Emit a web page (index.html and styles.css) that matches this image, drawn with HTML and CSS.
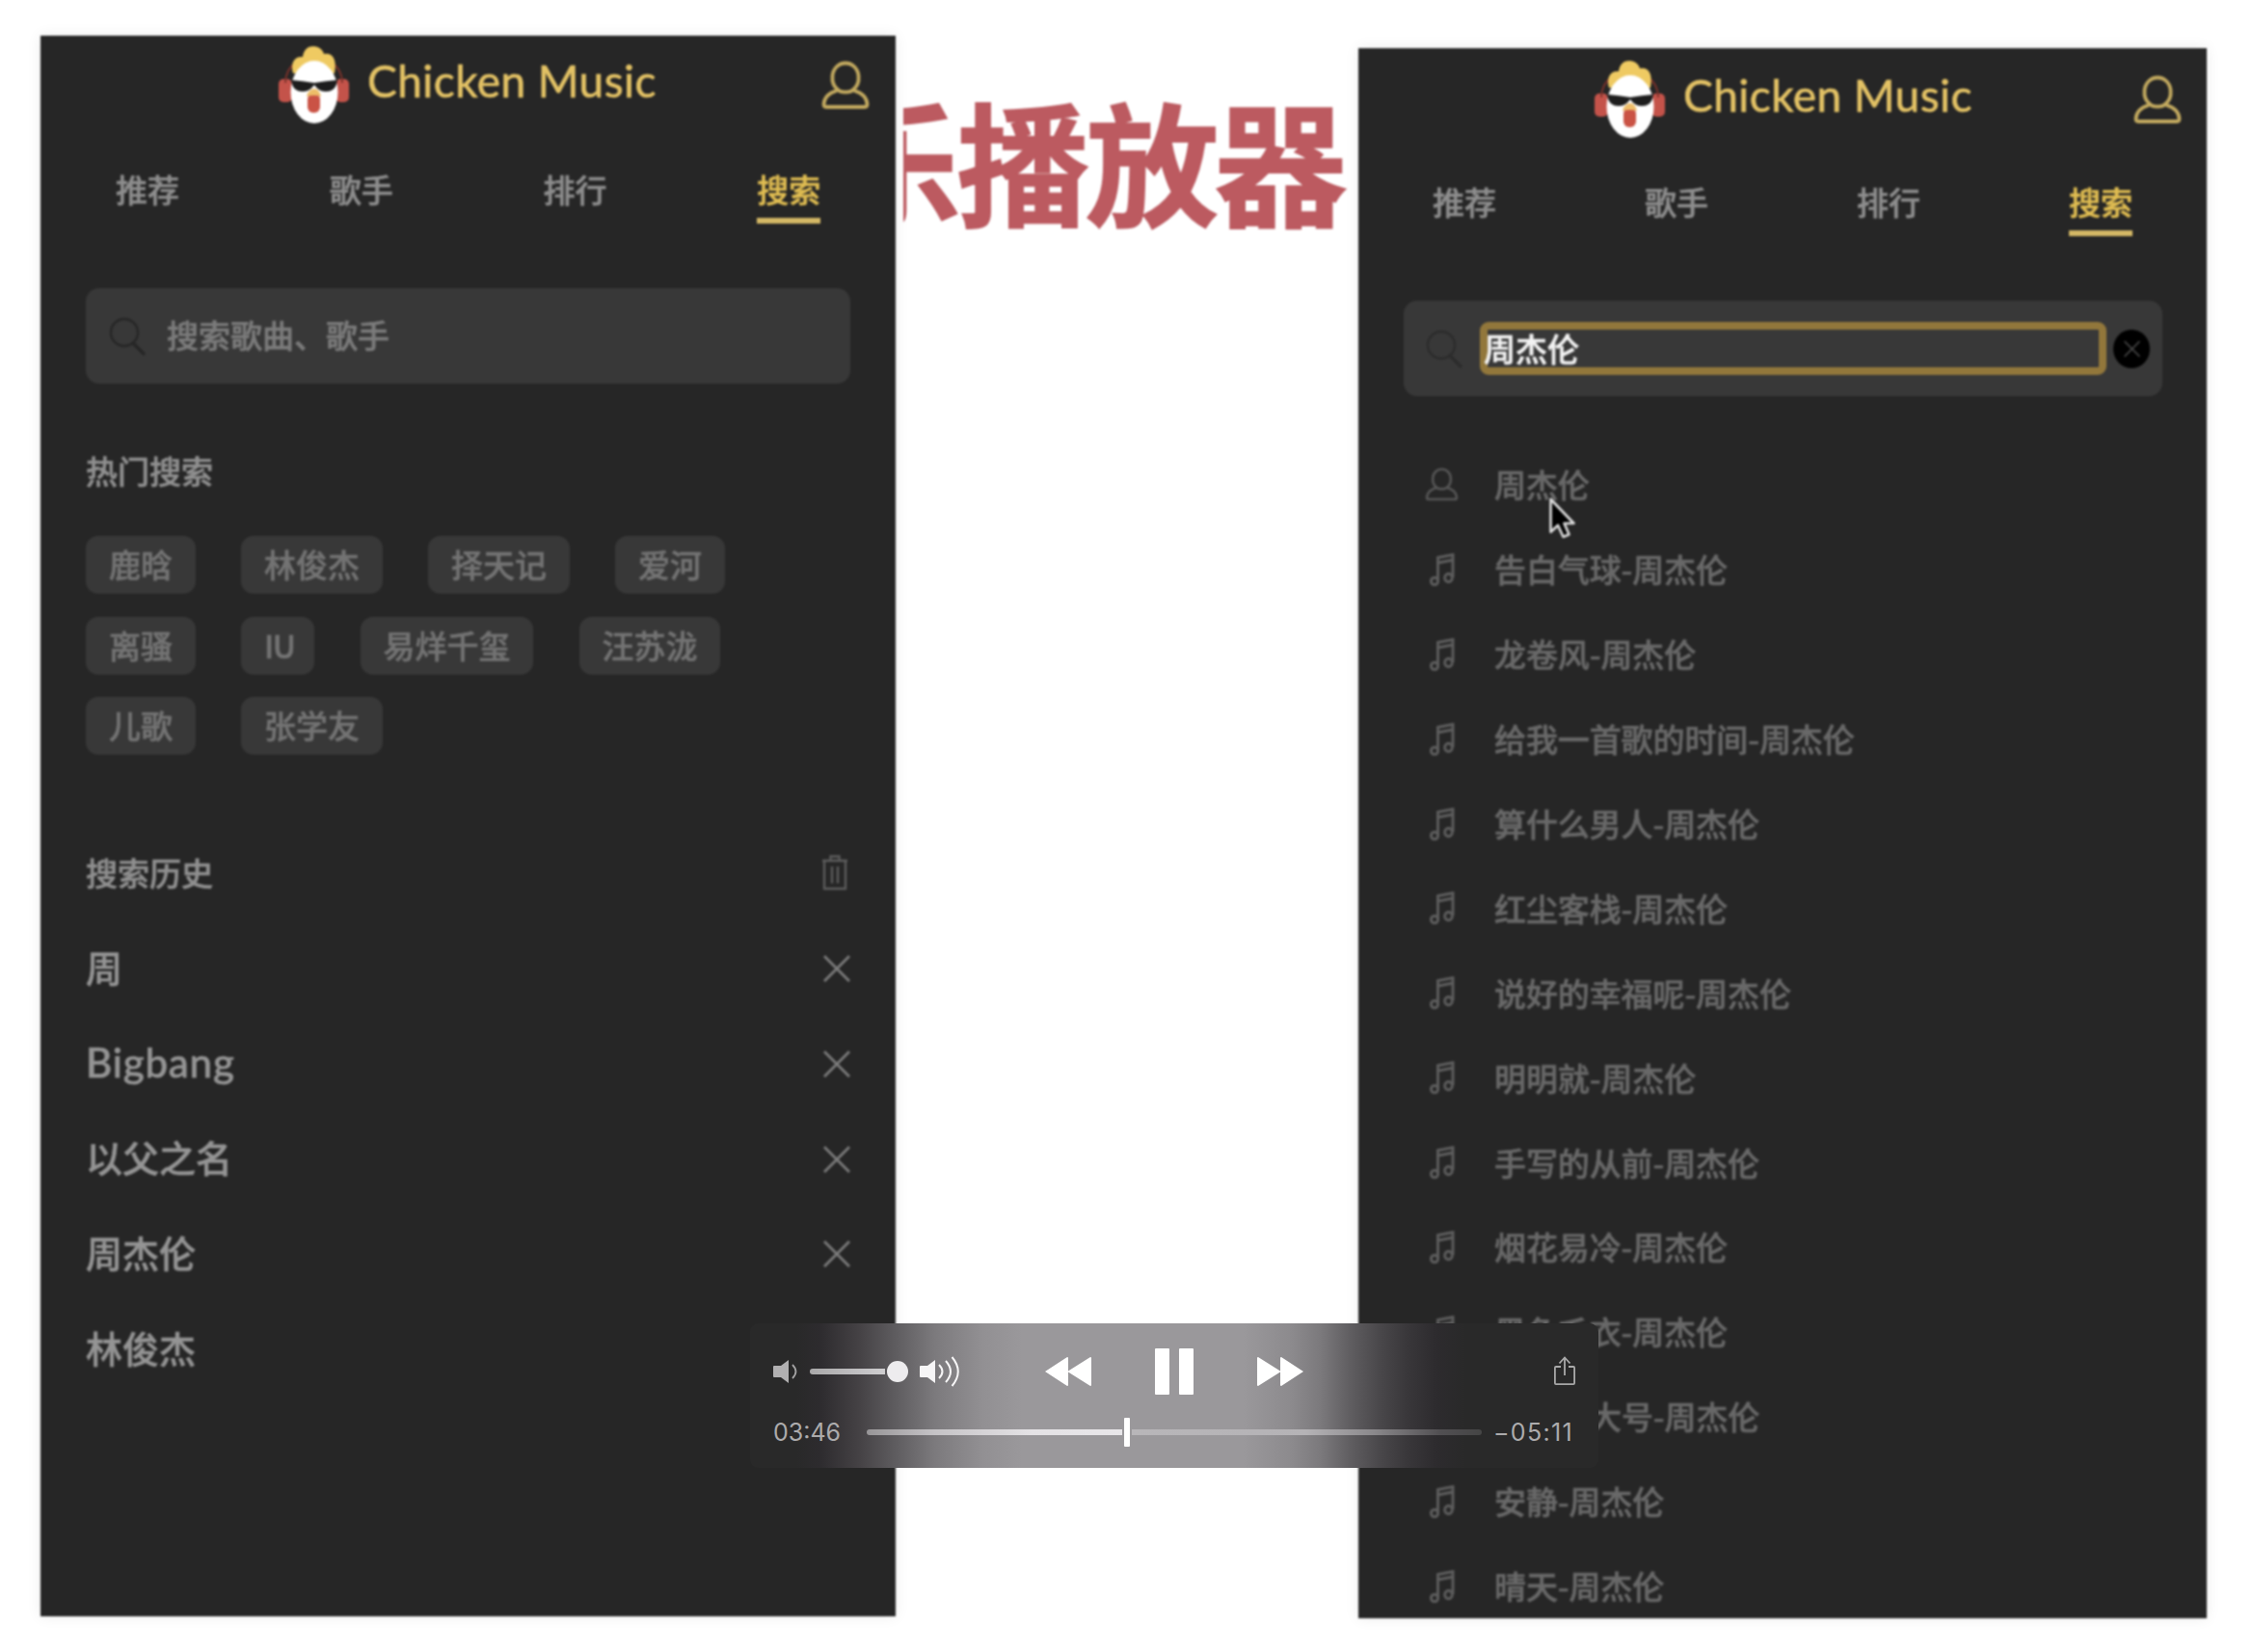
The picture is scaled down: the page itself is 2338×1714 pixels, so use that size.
FILE: index.html
```html
<!DOCTYPE html>
<html lang="zh-CN">
<head>
<meta charset="utf-8">
<title>Chicken Music</title>
<link rel="stylesheet" href="styles.css">
</head>
<body>
<svg class="defs" aria-hidden="true">
  <symbol id="chicken" viewBox="0 0 75 80">
    <rect x="1" y="34" width="14" height="24" rx="5" fill="#c4534a"/>
    <rect x="60" y="34" width="14" height="24" rx="5" fill="#c4534a"/>
    <path d="M8 38C8 26 14 20 20 16M67 38C67 26 61 20 55 16" fill="none" stroke="#7d322b" stroke-width="2"/>
    <path d="M16 28C13 18 17 10 26 11C27 3 32 0 37 0C43 0 47 4 48 8C56 6 62 12 59 28Z" fill="#efca62"/>
    <ellipse cx="38" cy="47.500" rx="24.500" ry="32.500" fill="#fff"/>
    <path d="M14 35Q26 36 38 38Q50 36 62 35C61 44 56 47 50 47C44 47 41 44 38 40C35 44 32 47 26 47C20 47 15 44 14 35Z" fill="#1d1d1d"/>
    <rect x="31" y="49" width="13" height="20" rx="6" fill="#ca5345"/>
    <path d="M30 52C31 47 35 44 38 44C41 44 44 47 45 52Q38 50 30 52Z" fill="#edbd68"/>
  </symbol>
  <symbol id="user" viewBox="0 0 50 51">
    <path d="M17 30C12.500 26.500 11 21 11.500 16C12 8 18 2.500 25 2.500S38 8 38.500 16C39 21 37.500 26.500 33 30C30 33.500 20 33.500 17 30ZM16 31C8 33.500 3 38 2.500 45Q2.500 48 5 48H45Q47.500 48 47.500 45C47 38 42 33.500 34 31" fill="none" stroke="currentColor" stroke-width="3.800" stroke-linejoin="round"/>
  </symbol>
  <symbol id="search" viewBox="0 0 38 40">
    <circle cx="16" cy="16" r="14" fill="none" stroke="currentColor" stroke-width="2.400"/>
    <path d="M25 27L36 38" stroke="currentColor" stroke-width="3.400" stroke-linecap="round"/>
  </symbol>
  <symbol id="note" viewBox="0 0 26 34">
    <g fill="none" stroke="currentColor" stroke-width="2.900">
      <ellipse cx="5" cy="29" rx="3.600" ry="3.800"/>
      <ellipse cx="19.500" cy="25.500" rx="3.800" ry="4.200"/>
      <path d="M8.500 29V4.500L24 1.500V25M8.500 10L24 7"/>
    </g>
  </symbol>
  <symbol id="trash" viewBox="0 0 28 38">
    <path d="M1 7H27M9.500 7V2.500H18.500V7M3 7V36H25V7M11 13V30.500M17 13V30.500" fill="none" stroke="currentColor" stroke-width="2.300"/>
  </symbol>
  <symbol id="cross" viewBox="0 0 28 28">
    <path d="M1 1L27 27M27 1L1 27" fill="none" stroke="currentColor" stroke-width="2.700"/>
  </symbol>
</svg>

<main class="stage">
  <section class="phone phone-left">
    <header class="bar">
      <svg class="logo"><use href="#chicken"/></svg>
      <h1 class="brand">Chicken Music</h1>
      <svg class="mine"><use href="#user"/></svg>
    </header>
    <nav class="tabs">
      <span class="tab"><b>推荐</b></span><span class="tab"><b>歌手</b></span><span class="tab"><b>排行</b></span><span class="tab active"><b>搜索</b></span>
    </nav>
    <div class="search-box">
      <svg class="search-icon"><use href="#search"/></svg>
      <span class="placeholder">搜索歌曲、歌手</span>
    </div>
    <section class="hot">
      <h2 class="title">热门搜索</h2>
      <div class="tags">
        <span class="tag">鹿晗</span><span class="tag">林俊杰</span><span class="tag">择天记</span><span class="tag">爱河</span>
        <span class="tag">离骚</span><span class="tag tag-latin">IU</span><span class="tag">易烊千玺</span><span class="tag">汪苏泷</span>
        <span class="tag">儿歌</span><span class="tag">张学友</span>
      </div>
    </section>
    <section class="history">
      <div class="history-head"><h2 class="title">搜索历史</h2><svg class="trash"><use href="#trash"/></svg></div>
      <ul class="history-list">
        <li><span>周</span><svg class="cross"><use href="#cross"/></svg></li>
        <li><span class="latin">Bigbang</span><svg class="cross"><use href="#cross"/></svg></li>
        <li><span>以父之名</span><svg class="cross"><use href="#cross"/></svg></li>
        <li><span>周杰伦</span><svg class="cross"><use href="#cross"/></svg></li>
        <li><span>林俊杰</span></li>
      </ul>
    </section>
  </section>

  <div class="headline"><span>乐播放器</span></div>

  <section class="phone phone-right">
    <header class="bar">
      <svg class="logo"><use href="#chicken"/></svg>
      <h1 class="brand">Chicken Music</h1>
      <svg class="mine"><use href="#user"/></svg>
    </header>
    <nav class="tabs">
      <span class="tab"><b>推荐</b></span><span class="tab"><b>歌手</b></span><span class="tab"><b>排行</b></span><span class="tab active"><b>搜索</b></span>
    </nav>
    <div class="search-box">
      <svg class="search-icon"><use href="#search"/></svg>
      <span class="query">周杰伦</span>
      <span class="clear"><svg class="clear-cross"><use href="#cross"/></svg></span>
    </div>
    <ul class="suggest">
      <li><svg class="singer"><use href="#user"/></svg><span>周杰伦</span></li>
      <li><svg class="note"><use href="#note"/></svg><span>告白气球-周杰伦</span></li>
      <li><svg class="note"><use href="#note"/></svg><span>龙卷风-周杰伦</span></li>
      <li><svg class="note"><use href="#note"/></svg><span>给我一首歌的时间-周杰伦</span></li>
      <li><svg class="note"><use href="#note"/></svg><span>算什么男人-周杰伦</span></li>
      <li><svg class="note"><use href="#note"/></svg><span>红尘客栈-周杰伦</span></li>
      <li><svg class="note"><use href="#note"/></svg><span>说好的幸福呢-周杰伦</span></li>
      <li><svg class="note"><use href="#note"/></svg><span>明明就-周杰伦</span></li>
      <li><svg class="note"><use href="#note"/></svg><span>手写的从前-周杰伦</span></li>
      <li><svg class="note"><use href="#note"/></svg><span>烟花易冷-周杰伦</span></li>
      <li><svg class="note"><use href="#note"/></svg><span>黑色毛衣-周杰伦</span></li>
      <li><svg class="note"><use href="#note"/></svg><span class="covered">大号-周杰伦</span></li>
      <li><svg class="note"><use href="#note"/></svg><span>安静-周杰伦</span></li>
      <li><svg class="note"><use href="#note"/></svg><span>晴天-周杰伦</span></li>
    </ul>
    <svg class="cursor" viewBox="0 0 27 43">
      <path d="M1.500 2V36L9 29L14.500 41L20.500 38.500L15.500 27H25.500Z" fill="#000" stroke="#dcdcdc" stroke-width="2.600" stroke-linejoin="round"/>
    </svg>
  </section>
</main>

<aside class="player">
  <div class="controls">
    <svg class="vol-low" viewBox="0 0 26 24"><path d="M0 7Q0 6 1 6H8L16 0V24L8 18H1Q0 18 0 17Z" fill="#b1b0b1"/><path d="M20 5Q27 12 20 19" fill="none" stroke="#a1a0a1" stroke-width="1.800"/></svg>
    <div class="volume"><i></i><b></b></div>
    <svg class="vol-high" viewBox="0 0 42 32"><path d="M0 11Q0 10 1 10H8L16 4V28L8 22H1Q0 22 0 21Z" fill="#f6f5f6"/><path d="M20 9Q27 16 20 23M27 5Q37 16 27 27M33.500 1Q46 16 33.500 31" fill="none" stroke="#f6f5f6" stroke-width="2"/></svg>
    <svg class="skip rewind" viewBox="0 0 48 30"><path d="M0 15L23 0Q24 0 24 1V14.500L47 0Q48 0 48 1V29Q48 30 47 30L24 15.500V29Q24 30 23 30Z" fill="#fff"/></svg>
    <div class="pause"><i></i><i></i></div>
    <svg class="skip forward" viewBox="0 0 48 30"><path d="M48 15L25 0Q24 0 24 1V14.500L1 0Q0 0 0 1V29Q0 30 1 30L24 15.500V29Q24 30 25 30Z" fill="#fff"/></svg>
    <svg class="share" viewBox="0 0 22 30"><path d="M7 11H2Q.9 11 .9 12V28Q.9 29.100 2 29.100H20Q21.100 29.100 21.100 28V12Q21.100 11 20 11H15M11 20V1.500M5.500 7.500L11 1.500L16.500 7.500" fill="none" stroke="#a9a9a9" stroke-width="1.800"/></svg>
  </div>
  <div class="timeline">
    <span class="time">03:46</span>
    <div class="track"><i class="played"></i><b class="thumb"></b><i class="rest"></i></div>
    <span class="time remain">−05:11</span>
  </div>
</aside>
</body>
</html>
```
FILE: styles.css
```css
* { box-sizing: border-box; }
body {
  margin: 0;
  width: 2338px;
  height: 1714px;
  overflow: hidden;
  position: relative;
  background: #fff;
  font-family: "Noto Sans CJK SC", sans-serif;
}
.defs { position: absolute; width: 0; height: 0; }
h1, h2, ul { margin: 0; padding: 0; list-style: none; }
svg { flex: none; display: block; }

.stage { display: flex; align-items: flex-start; padding-left: 42px; }

/* video frame content is slightly out of focus */
.phone {
  flex: none;
  position: relative;
  overflow: hidden;
  background: #262626;
  box-shadow: 0 0 14px rgba(0, 0, 0, .08);
  font-size: 33px;
  font-weight: 500;
  -webkit-text-stroke: .6px currentColor;
  filter: blur(.9px);
}
.phone-left { width: 887px; height: 1640px; margin-top: 37px; }
.phone-right { width: 880px; height: 1629px; margin-top: 50px; }

.bar { display: flex; height: 108px; padding: 11px 27px 0 246px; }
.logo { width: 75px; height: 80px; }
.brand {
  margin-left: 18px;
  height: 72px;
  font: 400 46px/72px Lato, sans-serif;
  letter-spacing: .45px;
  color: #e3c265;
  white-space: nowrap;
}
.mine { width: 50px; height: 51px; margin: 15px 0 0 auto; color: #c2a95f; }

.tabs { display: flex; height: 87px; padding-top: 24px; }
.tab { flex: 1; display: flex; justify-content: center; color: #8d8d8d; }
.tab b { font-weight: 500; height: 63px; line-height: 54px; }
.active { color: #e0bd52; }
.active b { border-bottom: 6px solid #d3b765; }

.search-box {
  display: flex;
  align-items: center;
  height: 99px;
  margin: 67px 47px 0;
  padding-left: 24px;
  border-radius: 14px;
  background: #383838;
}
.search-icon { width: 38px; height: 40px; color: #262626; }
.placeholder { margin: -3px 0 0 22px; color: #7b7b7b; }

.hot { padding: 72px 47px 0; }
.title { font-size: 33px; font-weight: 500; line-height: 36px; color: #8f8f8f; }
.tags { display: flex; flex-wrap: wrap; gap: 23.500px 47.500px; margin-top: 50px; padding-right: 80px; }
.tag { height: 60px; padding: 0 23.500px 0 24px; border-radius: 13px; line-height: 58px; background: #383838; color: #737373; }
.tag-latin { width: 76px; letter-spacing: -1.500px; }

.history { padding: 103px 47px 0; }
.history-head { display: flex; justify-content: space-between; align-items: center; height: 38px; }
.trash { width: 28px; height: 38px; margin-right: 2px; color: #5c5c5c; }
.history-list { margin-top: 32px; font-size: 38px; color: #949494; }
.history-list li { display: flex; align-items: center; justify-content: space-between; height: 98.700px; }
.history-list span { margin-top: -6px; }
.cross { width: 28px; height: 28px; color: #7b7b7b; }
.history-list .latin { margin-top: -4px; font-family: Lato, sans-serif; font-size: 42px; font-weight: 500; letter-spacing: .8px; }

.headline {
  flex: none;
  width: 472px;
  height: 190px;
  margin: 69px 0 0 8px;
  overflow: hidden;
  filter: blur(.8px);
}
.headline span {
  display: block;
  margin-left: -78px;
  white-space: nowrap;
  font-size: 138px;
  font-weight: 700;
  line-height: 190px;
  letter-spacing: -4.500px;
  color: #bc5a60;
  -webkit-text-stroke: 1.500px #bc5a60;
}

.phone-right .bar { padding: 13px 26px 0 244px; }
.phone-right .search-box { margin-right: 46px; }
.phone-right .search-icon { margin-left: -1px; color: #2c2c2c; }
.query {
  width: 650px;
  height: 55px;
  margin-left: 18px;
  border: 8px solid #92773b;
  border-radius: 9px;
  color: #f2f2f2;
  line-height: 38px;
  text-indent: -4px;
}
.clear {
  display: flex;
  align-items: center;
  justify-content: center;
  width: 38px;
  height: 40px;
  margin-left: 7px;
  border-radius: 50%;
  background: #000;
}
.clear-cross { width: 17px; height: 18px; color: #454545; }

.suggest { padding: 48px 0 0 69px; color: #686868; }
.suggest li { display: flex; align-items: center; height: 87.900px; white-space: nowrap; }
.suggest span { margin: -1px 0 0 37px; letter-spacing: -.1px; }
.suggest .covered { margin-left: 136px; }
.singer { width: 35px; height: 35px; color: #555; }
.note { width: 26px; height: 34px; margin: 0 4px 0 5px; color: #5d5d5d; }
.cursor { position: absolute; left: 198px; top: 466px; width: 27px; height: 43px; }

.player {
  position: absolute;
  left: 778px;
  top: 1373px;
  width: 880px;
  height: 150px;
  padding: 25px 24px 0;
  border-radius: 9px;
  background: linear-gradient(90deg, #292929 0, #292929 48px, #2d2b2e 72px, #444144 112px, #5f5d60 152px, #7c7a7d 192px, #929093 242px, #9a989b 282px, #9a989b 512px, #8c8a8d 562px, #7b797c 592px, #605e61 622px, #4a484b 652px, #39373a 682px, #2d2b2e 712px, #292929 742px);
}
.controls { display: flex; align-items: center; height: 50px; }
.vol-low { width: 26px; height: 24px; }
.volume { display: flex; align-items: center; width: 102px; margin-left: 12px; }
.volume i { width: 78px; height: 6px; margin-right: 2px; border-radius: 3px 0 0 3px; background: linear-gradient(90deg, #a9a8a9, #cfced0); }
.volume b { width: 22px; height: 22px; border-radius: 50%; background: #edecee; }
.vol-high { width: 42px; height: 32px; margin-left: 12px; }
.skip { width: 48px; height: 30px; }
.rewind { margin-left: 88px; }
.pause { display: flex; gap: 10px; margin-left: 66px; }
.pause i { width: 15px; height: 48px; border-radius: 1px; background: #fff; }
.forward { margin-left: 66px; }
.share { width: 22px; height: 30px; margin-left: 260px; margin-top: -3px; }
.timeline { display: flex; align-items: center; height: 30px; margin-top: 23px; }
.time { flex: none; width: 97px; font: 400 25px/30px Inter, sans-serif; color: #acabac; white-space: nowrap; }
.track { display: flex; flex: none; align-items: center; width: 638px; }
.played { width: 265px; height: 6px; border-radius: 3px 0 0 3px; background: linear-gradient(90deg, #979597, #c5c3c6 70px, #e4e2e5 170px, #e8e6e9); }
.thumb { width: 6px; height: 30px; margin: 0 2px; border-radius: 1px; background: #fff; }
.rest { flex: 1; height: 6px; border-radius: 0 3px 3px 0; background: linear-gradient(90deg, #b8b6b9 0, #b5b3b6 180px, #8b898c 250px, #514f52 320px, #454545 100%); }
.remain { width: 84px; margin-left: 12px; letter-spacing: 1.300px; }
```
